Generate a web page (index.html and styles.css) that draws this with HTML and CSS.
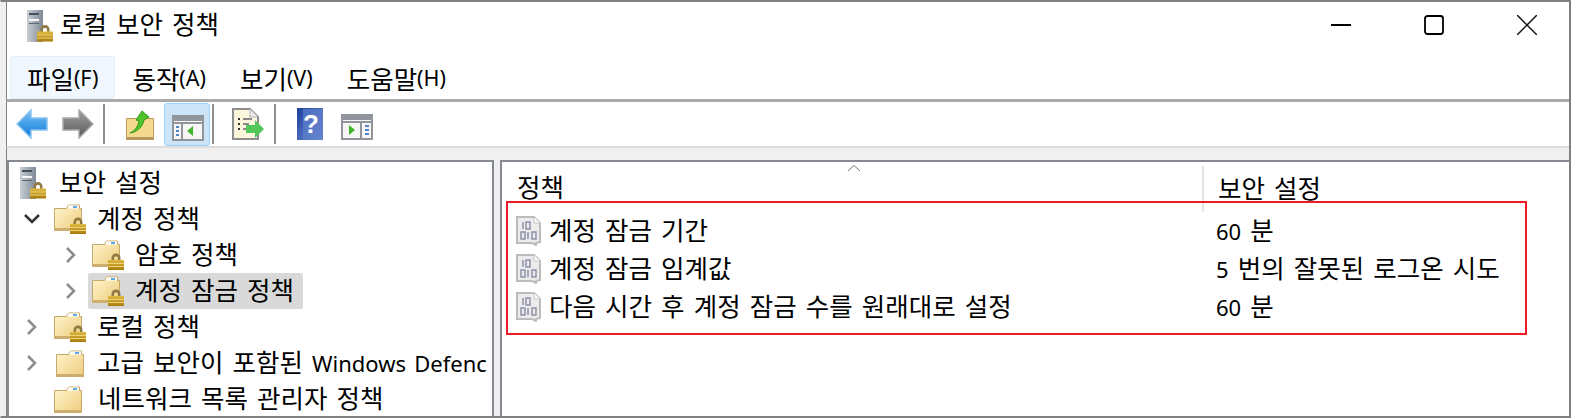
FILE: index.html
```html
<!DOCTYPE html>
<html lang="ko">
<head>
    <meta charset="UTF-8">
    <meta name="viewport" content="width=device-width, initial-scale=1.0">
    <title>로컬 보안 정책</title>
    <link rel="stylesheet" href="styles.css">
</head>
<body>
    <!-- Ikon dikongsi -->
    <svg class="icon-defs" aria-hidden="true">
        <defs>
            <linearGradient id="g-folder" x1="0" y1="0" x2="1" y2="1">
                <stop offset="0" stop-color="#fff6cf"/>
                <stop offset="1" stop-color="#eecb7c"/>
            </linearGradient>
            <linearGradient id="g-lock" x1="0" y1="0" x2="0" y2="1">
                <stop offset="0" stop-color="#e0b93f"/>
                <stop offset="1" stop-color="#a87c0c"/>
            </linearGradient>
            <linearGradient id="g-server" x1="0" y1="0" x2="1" y2="0">
                <stop offset="0" stop-color="#c8ced4"/>
                <stop offset="1" stop-color="#7e8a96"/>
            </linearGradient>
            <linearGradient id="g-blue" x1="0" y1="0" x2="0" y2="1">
                <stop offset="0" stop-color="#7cc4f5"/>
                <stop offset="1" stop-color="#0a78d8"/>
            </linearGradient>
            <linearGradient id="g-grey" x1="0" y1="0" x2="0" y2="1">
                <stop offset="0" stop-color="#a0a0a0"/>
                <stop offset="1" stop-color="#5a5a5a"/>
            </linearGradient>
            <linearGradient id="g-help" x1="0" y1="0" x2="1" y2="1">
                <stop offset="0" stop-color="#1c3f9c"/>
                <stop offset="1" stop-color="#6f8fd8"/>
            </linearGradient>

            <symbol id="i-lock" viewBox="0 0 16 17">
                <path d="M3.500 8V5a4.500 4.500 0 0 1 9 0v3h-2.500V5.200a2 2 0 0 0-4 0V8z" fill="#8f7a44"/>
                <rect y="7" width="16" height="10" fill="url(#g-lock)"/>
                <path d="M0 10.500h16M0 13.500h16" stroke="#edd27a" stroke-width="1"/>
            </symbol>
            <symbol id="i-server-lock" viewBox="0 0 26 32">
                <rect x="0" y="0" width="16" height="32" fill="url(#g-server)"/>
                <rect x="2" y="3" width="10" height="2" fill="#45505c"/>
                <rect x="2" y="9" width="10" height="2" fill="#f4f6f8"/>
                <rect x="2" y="13" width="10" height="1" fill="#5a6670"/>
                <use href="#i-lock" x="10" y="14" width="16" height="18"/>
            </symbol>
            <symbol id="i-folder" viewBox="0 0 28 27">
                <path d="M0.500 4.500h12l2-3.500h11v3.500h2v22H0.500z" fill="url(#g-folder)" stroke="#c6a86a"/>
                <rect x="14" y="1.500" width="11" height="3" fill="#fff"/>
                <rect x="19" y="2" width="4" height="2" fill="#5aa8e8"/>
                <rect x="0" y="24" width="28" height="3" fill="#cdae6e"/>
            </symbol>
            <symbol id="i-folder-lock" viewBox="0 0 32 30">
                <use href="#i-folder" width="28" height="27"/>
                <use href="#i-lock" x="16" y="13" width="16" height="17"/>
            </symbol>
            <symbol id="i-policy" viewBox="0 0 26 30">
                <path d="M1 1h17l6 6v19l-4 1v2l-4-2H1z" fill="#ececec" stroke="#bcbcbc" stroke-width="2"/>
                <path d="M18 1v6h6" fill="#fafafa" stroke="#c8c8c8"/>
                <g fill="none" stroke="#8a8aa6" stroke-width="1.400">
                    <path d="M7 6v7"/>
                    <rect x="10" y="6" width="4" height="7"/>
                    <rect x="5" y="16" width="4" height="7"/>
                    <path d="M12 16v7"/>
                    <rect x="16" y="16" width="4" height="7"/>
                </g>
            </symbol>
        </defs>
    </svg>

    <div class="window">
        <header class="title-bar">
            <svg class="title-icon"><use href="#i-server-lock"/></svg>
            <span class="title-text">로컬 보안 정책</span>
            <div class="window-btns">
                <svg class="window-btn" viewBox="0 0 20 20"><path d="M0 10h20" stroke="#000" stroke-width="2"/></svg>
                <svg class="window-btn" viewBox="0 0 20 20"><rect x="1" y="1" width="18" height="18" rx="2.500" fill="none" stroke="#000" stroke-width="1.800"/></svg>
                <svg class="window-btn" viewBox="0 0 20 20"><path d="M0 0l20 20M20 0L0 20" stroke="#111" stroke-width="1.500"/></svg>
            </div>
        </header>

        <nav class="menu-bar">
            <span class="menu-item active">파일<small>(F)</small></span>
            <span class="menu-item">동작<small>(A)</small></span>
            <span class="menu-item">보기<small>(V)</small></span>
            <span class="menu-item">도움말<small>(H)</small></span>
        </nav>

        <div class="toolbar">
            <svg class="tool tool-back" viewBox="0 0 32 30"><path d="M15 1L1 15l14 14v-8h16V9H15z" fill="url(#g-blue)" stroke="#8cc4ee" stroke-width="1.500"/></svg>
            <svg class="tool tool-forward" viewBox="0 0 32 30"><path d="M17 1l14 14-14 14v-8H1V9h16z" fill="url(#g-grey)" stroke="#a8a8a8" stroke-width="1.500"/></svg>
            <span class="tool-sep sep-first"></span>
            <svg class="tool tool-up" viewBox="0 0 28 30">
                <path d="M0.500 8.500h27v21H0.500z" fill="#f5d98e" stroke="#b89a58"/>
                <rect y="27" width="28" height="3" fill="#b8985a"/>
                <path d="M4 23c5-2 8-7 9-12l-3-1 6-9 7 6-5 3c-1 6-6 12-14 13z" fill="#4fc22c" stroke="#2f9a18"/>
            </svg>
            <span class="tool-toggle">
                <svg class="tool-panel" viewBox="0 0 32 26">
                    <rect x="1" y="1" width="30" height="24" fill="#f6f6f6" stroke="#8f959b" stroke-width="2"/>
                    <path d="M0 4h32" stroke="#8f959b" stroke-width="4"/>
                    <path d="M0 8h32" stroke="#8f959b" stroke-width="2"/>
                    <path d="M10 8v18" stroke="#8f959b" stroke-width="2"/>
                    <path d="M4 12h3M4 16h3M4 20h3" stroke="#4f84c8" stroke-width="2"/>
                    <path d="M21 11v10l-6-5z" fill="#3fb52a"/>
                </svg>
            </span>
            <span class="tool-sep sep-second"></span>
            <svg class="tool tool-export" viewBox="0 0 32 32">
                <path d="M1 1h17l8 8v22H1z" fill="#fbf6dc" stroke="#8d8d8d" stroke-width="2"/>
                <path d="M18 1v8h8" fill="#ececec" stroke="#b4b4b4"/>
                <path d="M6 11h2M6 16h2M6 21h2" stroke="#333" stroke-width="2"/>
                <path d="M11 11h9M11 16h6M11 21h6" stroke="#888" stroke-width="2"/>
                <path d="M23 12l9 9-9 9v-5h-9v-8h9z" fill="#52c85a"/>
            </svg>
            <span class="tool-sep sep-third"></span>
            <svg class="tool tool-help" viewBox="0 0 26 32">
                <rect width="26" height="32" fill="url(#g-help)"/>
                <rect x="6" y="1" width="20" height="30" fill="#5f7fcc" opacity="0.700"/>
                <text x="14" y="25" class="help-mark">?</text>
            </svg>
            <svg class="tool tool-action" viewBox="0 0 32 26">
                <rect x="1" y="1" width="30" height="24" fill="#f6f6f6" stroke="#8f959b" stroke-width="2"/>
                <path d="M0 4h32" stroke="#8f959b" stroke-width="4"/>
                <path d="M0 8h32" stroke="#8f959b" stroke-width="2"/>
                <path d="M20 8v18" stroke="#8f959b" stroke-width="2"/>
                <path d="M24 12h4M24 16h4M24 20h4" stroke="#4f84c8" stroke-width="2"/>
                <path d="M8 11v10l6-5z" fill="#3fb52a"/>
            </svg>
        </div>

        <div class="panes">
            <aside class="tree-pane">
                <div class="tree-row row-root">
                    <svg class="icon-server"><use href="#i-server-lock"/></svg>
                    <span>보안 설정</span>
                </div>
                <div class="tree-row level-1">
                    <svg class="chevron open" viewBox="0 0 16 10"><path d="M1 1l7 7 7-7" /></svg>
                    <svg class="icon-folder"><use href="#i-folder-lock"/></svg>
                    <span>계정 정책</span>
                </div>
                <div class="tree-row level-2">
                    <svg class="chevron" viewBox="0 0 10 16"><path d="M1 1l7 7-7 7"/></svg>
                    <svg class="icon-folder"><use href="#i-folder-lock"/></svg>
                    <span>암호 정책</span>
                </div>
                <div class="tree-row level-2">
                    <svg class="chevron" viewBox="0 0 10 16"><path d="M1 1l7 7-7 7"/></svg>
                    <div class="selected-node">
                        <svg class="icon-folder"><use href="#i-folder-lock"/></svg>
                        <span>계정 잠금 정책</span>
                    </div>
                </div>
                <div class="tree-row level-1">
                    <svg class="chevron" viewBox="0 0 10 16"><path d="M1 1l7 7-7 7"/></svg>
                    <svg class="icon-folder"><use href="#i-folder-lock"/></svg>
                    <span>로컬 정책</span>
                </div>
                <div class="tree-row level-1">
                    <svg class="chevron" viewBox="0 0 10 16"><path d="M1 1l7 7-7 7"/></svg>
                    <svg class="icon-folder plain"><use href="#i-folder"/></svg>
                    <span>고급 보안이 포함된 <span class="latin">Windows Defenc</span></span>
                </div>
                <div class="tree-row level-1 no-child">
                    <svg class="icon-folder plain"><use href="#i-folder"/></svg>
                    <span>네트워크 목록 관리자 정책</span>
                </div>
            </aside>

            <main class="list-pane">
                <svg class="sort-arrow" viewBox="0 0 12 6"><path d="M0 6l6-5.500L12 6" fill="none" stroke="#777"/></svg>
                <div class="list-header">
                    <div class="col-policy">정책</div>
                    <div class="col-setting">보안 설정</div>
                </div>
                <div class="list-row">
                    <div class="col-policy"><svg class="icon-policy"><use href="#i-policy"/></svg>계정 잠금 기간</div>
                    <div class="col-setting"><span class="latin">60</span> 분</div>
                </div>
                <div class="list-row">
                    <div class="col-policy"><svg class="icon-policy"><use href="#i-policy"/></svg>계정 잠금 임계값</div>
                    <div class="col-setting"><span class="latin">5</span> 번의 잘못된 로그온 시도</div>
                </div>
                <div class="list-row">
                    <div class="col-policy"><svg class="icon-policy"><use href="#i-policy"/></svg>다음 시간 후 계정 잠금 수를 원래대로 설정</div>
                    <div class="col-setting"><span class="latin">60</span> 분</div>
                </div>
                <!-- Kotak merah penanda -->
                <div class="highlight-box"></div>
            </main>
        </div>
    </div>
</body>
</html>
```

FILE: styles.css
```css
* {
    box-sizing: border-box;
}

html, body {
    margin: 0;
    padding: 0;
    height: 100%;
}

body {
    font-family: "Noto Sans", "Noto Sans CJK KR", sans-serif;
    color: #000;
    background-color: #f0f0f0;
    overflow: hidden;
}

.icon-defs {
    position: absolute;
    width: 0;
    height: 0;
}

.latin {
    font-size: 22px;
}

.window {
    height: 418px;
    border-top: 2px solid #808080;
    border-right: 2px solid #808080;
    border-bottom: 2px solid #808080;
    border-left: 1px solid #f0f0f0;
    padding-left: 4px;
    display: flex;
    flex-direction: column;
    background-color: #f0f0f0;
}

.title-bar {
    height: 54px;
    margin-left: 1px;
    padding-left: 20px;
    padding-bottom: 9px;
    display: flex;
    align-items: center;
    background-color: #fff;
    border-left: 1px solid #808080;
}

.title-icon {
    width: 26px;
    height: 32px;
    margin-top: 2px;
    margin-right: 7px;
}

.title-text {
    font-size: 25.5px;
    word-spacing: 2.5px;
    line-height: 1;
}

.window-btns {
    margin-left: auto;
    display: flex;
    align-items: center;
}

.window-btn {
    width: 20px;
    height: 20px;
    margin-left: 73px;
}

.window-btn:last-child {
    margin-right: 32px;
}

.menu-bar {
    height: 46px;
    margin-left: 1px;
    display: flex;
    padding-left: 3px;
    background-color: #fff;
    border-left: 1px solid #808080;
    border-bottom: 3px solid #aaa;
}

.menu-item {
    padding: 0 16px;
    height: 43px;
    display: flex;
    align-items: center;
    font-size: 25.5px;
    border: 1px solid transparent;
    border-radius: 3px;
}

.menu-item small {
    font-size: 21.5px;
}

.menu-item.active {
    background-color: #f0f7fe;
    border-color: #e2effb;
}

.toolbar {
    height: 46px;
    margin-left: 1px;
    display: flex;
    align-items: center;
    padding-left: 9px;
    background-color: #fff;
    border-left: 1px solid #808080;
    border-bottom: 2px solid #dedede;
}

.tool {
    flex: none;
}

.tool-back {
    width: 32px;
    height: 30px;
}

.tool-forward {
    width: 32px;
    height: 30px;
    margin-left: 14px;
}

.tool-sep {
    width: 2px;
    height: 40px;
    background-color: #909090;
    flex: none;
}

.sep-first {
    margin-left: 9px;
}

.tool-up {
    width: 28px;
    height: 30px;
    margin-left: 21px;
    margin-top: 2px;
}

.tool-toggle {
    width: 46px;
    height: 43px;
    margin-left: 10px;
    padding: 11px 6px 0 7px;
    background-color: #cce4f7;
    border: 1px solid #99d1ff;
    border-radius: 3px;
    flex: none;
}

.tool-panel {
    display: block;
    width: 32px;
    height: 26px;
}

.sep-second {
    margin-left: 2px;
}

.tool-export {
    width: 32px;
    height: 32px;
    margin-left: 18px;
}

.sep-third {
    margin-left: 10px;
}

.tool-help {
    width: 26px;
    height: 32px;
    margin-left: 21px;
}

.help-mark {
    font-family: "Liberation Sans", sans-serif;
    font-size: 26px;
    font-weight: bold;
    text-anchor: middle;
    fill: #fff;
}

.tool-action {
    width: 32px;
    height: 26px;
    margin-left: 18px;
    margin-top: 6px;
}

.panes {
    flex: 1;
    min-height: 0;
    padding-top: 12px;
    margin-left: 1px;
    display: flex;
    gap: 6px;
    border-left: 1px solid #808080;
    background-color: #f0f0f0;
}

.tree-pane {
    width: 487px;
    flex: none;
    overflow: hidden;
    background-color: #fff;
    border: 2px solid #868a91;
    border-bottom: none;
    padding-top: 3px;
    font-size: 25.5px;
}

.tree-row {
    height: 36px;
    display: flex;
    align-items: center;
    white-space: nowrap;
    word-spacing: 2.5px;
    line-height: 1;
}

.row-root {
    padding-left: 11px;
}

.row-root span {
    margin-left: 13px;
}

.icon-server {
    width: 26px;
    height: 32px;
}

.level-1 {
    padding-left: 15px;
}

.level-1.no-child {
    padding-left: 45px;
}

.level-2 {
    padding-left: 54px;
}

.chevron {
    width: 16px;
    height: 16px;
    flex: none;
    fill: none;
    stroke: #8c8c8c;
    stroke-width: 2.500;
}

.chevron.open {
    stroke: #333;
}

.level-1 .chevron {
    margin-right: 14px;
}

.level-2 .chevron {
    margin-right: 10px;
}

.level-2 > .icon-folder {
    margin-left: 3px;
}

.icon-folder {
    width: 32px;
    height: 30px;
    flex: none;
    margin-right: 11px;
}

.icon-folder.plain {
    width: 28px;
    height: 27px;
    margin-left: 2px;
    margin-right: 13px;
}

.no-child .icon-folder.plain {
    margin-left: 0;
    margin-right: 16px;
}

.selected-node {
    display: flex;
    align-items: center;
    height: 36px;
    margin-left: -1px;
    padding: 0 9px 0 4px;
    background-color: #d9d9d9;
    border-radius: 2px;
}

.list-pane {
    flex: 1;
    position: relative;
    overflow: hidden;
    background-color: #fff;
    border: 2px solid #868a91;
    border-right: none;
    border-bottom: none;
    font-size: 25.5px;
    line-height: 1;
    word-spacing: 2.5px;
}

.sort-arrow {
    position: absolute;
    left: 346px;
    top: 3px;
    width: 12px;
    height: 6px;
}

.list-header {
    height: 50px;
    display: flex;
    align-items: center;
    padding-top: 2px;
}

.list-header .col-setting {
    border-left: 2px solid #e5e5e5;
    align-self: stretch;
    margin-top: 2px;
    padding-top: 10px;
}

.list-header .col-policy {
    padding-left: 15px;
}

.col-policy {
    width: 700px;
    flex: none;
}

.col-setting {
    padding-left: 14px;
    flex: 1;
}

.list-row {
    height: 38px;
    display: flex;
    align-items: center;
    white-space: nowrap;
}

.list-row .col-policy {
    display: flex;
    align-items: center;
    padding-left: 14px;
}

.icon-policy {
    width: 26px;
    height: 30px;
    margin-right: 7px;
    flex: none;
}

.highlight-box {
    position: absolute;
    left: 4px;
    top: 39px;
    width: 1021px;
    height: 134px;
    border: 2px solid #ed1c24;
}
```
